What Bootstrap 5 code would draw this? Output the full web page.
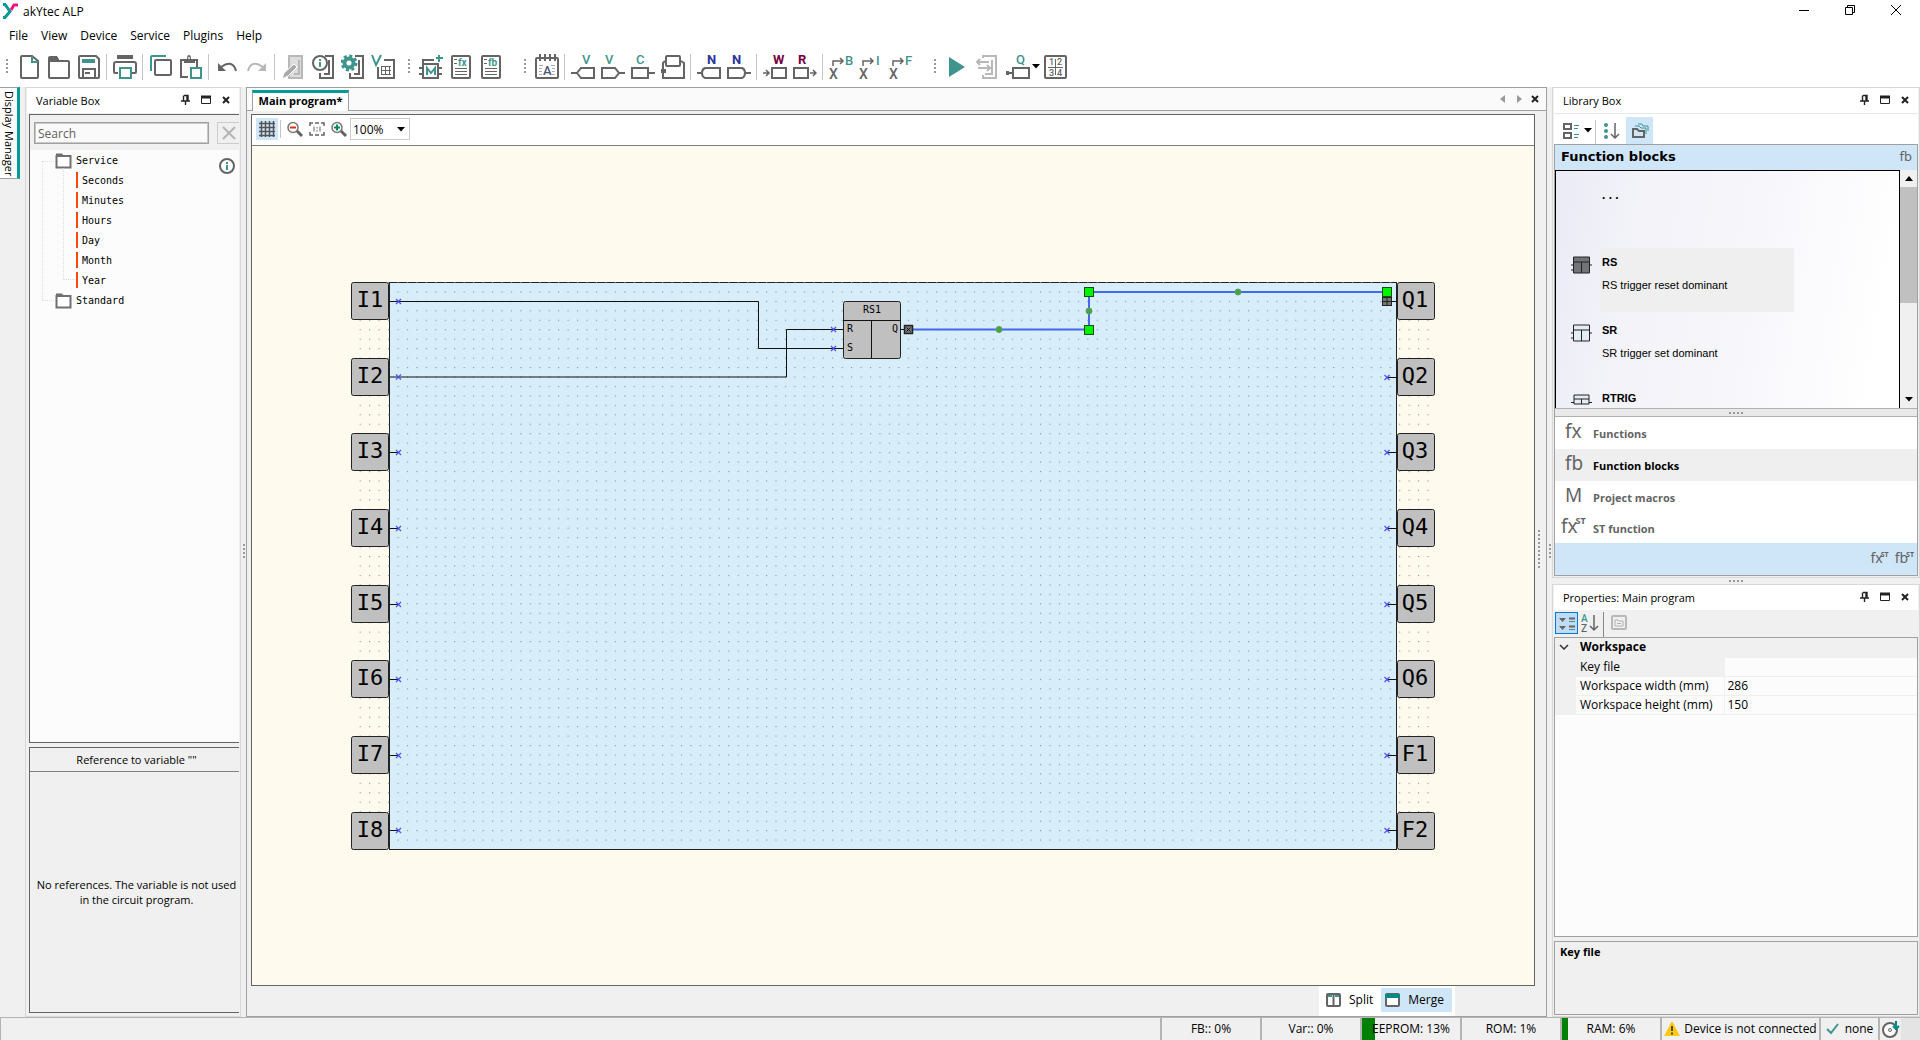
<!DOCTYPE html>
<html lang="en">
<head>
<meta charset="utf-8">
<meta name="viewport" content="width=device-width, initial-scale=1">
<title>akYtec ALP</title>
<link href="https://cdn.jsdelivr.net/npm/bootstrap@5.3.0/dist/css/bootstrap.min.css" rel="stylesheet">
<style>
:root{--ink:#646464;--teal:#3f958e;--brand:#009b96;--face:#f0f0f0;--sel:#cfe6f9;--edge:#a0a0a0;--soft:#d8d8d8;--dark:#646464}
body{font-family:"Open Sans","Noto Sans",sans-serif;font-size:11px;line-height:15px;color:#000;background:#fff;overflow:hidden}
svg{display:block;fill:none;flex:none}
button{border:0;background:none;padding:0;color:inherit;display:flex;align-items:center;justify-content:center}
.s{stroke:var(--ink);stroke-width:2}.s1{stroke:var(--ink);stroke-width:1}
.t{stroke:var(--teal);stroke-width:2}.t1{stroke:var(--teal);stroke-width:1}
.g{stroke:#b8b8b8;stroke-width:2}
.ft{fill:var(--teal)}.fi{fill:var(--ink)}.fw{fill:#fff}.fk{fill:#222}
.ic text{font-family:Roboto,"Liberation Sans",sans-serif;font-weight:500;font-size:13px}
.titlebar{height:24px;padding-left:2px;gap:4px}
.titlebar,.menubar{font-size:12px}
.caption-btn{width:46px;height:20px}
.titlebar .caption-btn:last-child{width:45px;margin-right:2px}
.menubar{height:24px;padding:0 0 2px 9px;gap:13px}
.menubar a{color:#000;text-decoration:none}
.toolbars{height:39px;padding-bottom:2px}
.bar-b{margin-left:4px}.bar-c,.bar-d{margin-left:12px}
.tool{width:30px;height:30px}
.grip{width:14px;height:30px;display:flex;justify-content:center;align-items:center}
.grip i,.vgrip{width:2px;height:16px;background:repeating-linear-gradient(#999 0 2px,transparent 2px 4px)}
.rule{width:2px;height:26px;margin:0 2px;border-left:1px solid #c4c4c4}
.work{background:var(--face);min-height:0}
.rail{width:25px}
.dm-tab{writing-mode:vertical-rl;white-space:nowrap;width:20px;height:92px;background:#fff;border-right:3px solid var(--brand);border-top:1px solid var(--edge);border-bottom:1px solid var(--edge);justify-content:flex-start;padding-top:3px;font-size:11px;line-height:16px}
.pane{border:1px solid var(--soft)}
.pane-head{height:25px;background:#fff;padding:0 3px 1px 9px;margin:0 1px}
.pane-head button{width:20px;height:20px}
.left{width:216px}
.box{border:1px solid var(--dark)}
.var-box{margin:1px 1px 0 3px}
.ref-box{margin:4px 1px 3px 3px;height:266px}
.search-row{height:35px;padding:7px 0 0 4px;gap:8px}
.search-row input{width:178px;height:22px;border:1px solid var(--edge);outline:1px solid #c8c8c8;outline-offset:-2px;background:#fafafa;padding:0 3px;font-size:12px}
.search-row input::placeholder{color:#606060}
.clear-btn{width:22px;height:22px;border:1px solid #ccc;border-right:0}
.tree{background:#fcfcfc;font-family:"DejaVu Sans Mono",monospace;font-size:10px}
.tree ul{list-style:none;margin:0;padding:0;position:relative}
.tree li>span{height:20px;display:flex;align-items:center}
.tree>ul::before{content:"";position:absolute;left:12px;top:11px;width:12px;height:140px;border:1px dotted #ddd;border-right:0}
.tree li>ul::before{content:"";position:absolute;left:33px;top:-2px;width:12px;height:112px;border:1px dotted #ddd;border-width:0 0 1px 1px}
.tree .folder{padding-left:25px;gap:4px}
.tree .leaf{padding-left:46px;gap:4px}
.tree .leaf::before{content:"";width:2px;height:16px;background:#f84a0a}
.ref-head{height:24px;border-bottom:1px solid #808080}
.splitter{width:5px}
.center{border:1px solid var(--edge);min-width:0}
.strip{height:23px;background:#fafafa;border-bottom:1px solid var(--edge);padding-left:5px}
.doc-tab{height:21px;margin-bottom:-1px;background:#fff;border:1px solid var(--edge);border-bottom:0;border-top:3px solid var(--brand);padding:0 4px 3px;width:97px;font-weight:700;white-space:nowrap}
.strip-nav{padding:0 3px 2px 0}
.strip-nav button{width:16px;height:18px}
.editor{margin:3px 0 0 4px}
.zoombar{height:31px;background:#fff;border-bottom:1px solid #808080;padding:0 0 2px 4px}
.grid-btn{width:22px;height:22px;background:var(--sel)}
.zoombar .rule{height:18px;margin:0 2px}
.zoom-btn{width:22px;height:22px}
.zoom-pick{position:relative;width:60px;height:22px}
.zoom-pick select{appearance:none;width:100%;height:100%;border:1px solid #ccc;background:#fff;font-size:12px;padding:0 2px;border-radius:0;color:#000}
.zoom-pick svg{position:absolute;right:5px;top:9px;pointer-events:none}
.canvas{background:#fffaee;min-height:0;overflow:hidden}
.canvas text{font-family:"DejaVu Sans Mono",monospace;fill:#000;text-anchor:middle}
.pin{font-size:22px}.tiny{font-size:10px}
.right-grip{width:11px;display:flex;align-items:center;justify-content:flex-start;padding-left:3px}
.right-grip .vgrip{height:38px}
.view-row{height:30px;padding-right:91px}
.view-tabs{background:#fff;padding:0 4px 3px 3px;width:136px;height:30px}
.view-tabs button{height:24px;gap:7px;padding:0 8px 0 3px;font-size:12px}
.view-tabs .active{background:var(--sel)}
.right{width:368px}
.lib-tools{height:31px;background:#fff;border-top:1px solid #e6e6e6;padding-left:9px;margin:0 1px}
.lib-tools button{height:27px}
.lib-tools .rule{height:24px;margin:0 6px 0 3px}
.sort-btn{margin-right:5px}
.cat-btn{width:27px;background:var(--sel)}
.lib{border:1px solid var(--edge);margin:0 1px 1px}
.lib-head{height:25px;background:var(--sel);padding:0 5px 2px 6px;font-family:"DejaVu Sans",sans-serif;font-weight:700;font-size:13px}
.fx-l{font-family:"Noto Sans",sans-serif;color:var(--ink);font-weight:400}
.lib-head .fx-l{font-size:13px}
.blocks{height:238px;border:1px solid #000;border-bottom:0;overflow:hidden;background:linear-gradient(100deg,#ebebf6,#f3f3f9 25%,#f7f6fb 55%,#fff 92%);font-family:"Liberation Sans",sans-serif}
.block-row{height:68px;padding:9px 0 0 14px}
.block-row .hit{width:194px;height:64px;padding:0 2px;text-align:left;display:flex;flex-direction:column;justify-content:flex-start;align-items:flex-start}
.block-row .hit.on{background:#efefef}
.block-row b,.block-row small{display:block;font-size:11px;line-height:15px}
.block-row b{margin-top:7px}
.block-row small{margin-top:8px}
.up-row{height:68px;padding:17px 0 0 46px;font-size:12px;font-weight:700}
.sbar{width:17px;background:var(--face)}
.sbar i{height:116px;background:#c0c0c0}
.sbar span{height:17px;display:flex;align-items:center;justify-content:center}
.hsplit{height:9px;background:#e9e9e9;border-top:1px solid #b0b0b0;border-bottom:1px solid #b0b0b0}
.dots{width:14px;height:2px;background:repeating-linear-gradient(90deg,#999 0 2px,transparent 2px 4px)}
.cat{height:32px;width:100%;background:#fff;color:var(--ink);font-weight:700;font-size:11px;justify-content:flex-start;padding-left:6px}
.cat .fx-l{width:32px;font-size:19px;padding:0 0 4px 4px;text-align:left;white-space:nowrap}
.cat .fx-l.wide-l{padding-left:0}
.cat.active{background:#efefef;color:#000}
.cat:last-of-type{height:30px}
.fx-l sup{font-size:9px;font-weight:700;top:-9px;left:-2px}
.more{height:32px;background:var(--sel);padding:0 1px 4px 0;gap:4px}
.more .fx-l{font-size:14px}.more .fx-l sup{font-size:7px;top:-6px}
.pane-gap{height:6px}
.prop-tools{height:27px;padding:2px 0 0 2px}
.prop-tools .on{background:#bfdcf3;border:1px solid #0078d7}
.prop-tools button{width:23px;height:22px}
.prop-tools .rule{border-color:#888}
.props{border:1px solid var(--edge);background:#fcfcfc;margin:0 1px}
.props table{width:100%;table-layout:fixed;font-size:12px}
.props td,.props th{height:19px;line-height:18px;padding:0 3px;border-bottom:1px solid #f0f0f0;font-weight:400}
.props .gut{width:21px;background:var(--face);padding:0}
.props .nm{width:148px;border-right:1px solid #f0f0f0;padding-left:4px}
.props .hd{background:var(--face);font-weight:700}
.props .cur{background:var(--face)}
.desc{height:74px;border:1px solid var(--edge);margin:4px 1px 1px;padding:2px 5px;font-weight:700}
.status{height:23px;background:var(--face);border-top:1px solid #b4b4b4;font-size:12px}
.cell{border-left:2px solid #b4b4b4;width:100px;height:22px;padding-bottom:1px;display:flex;align-items:center;justify-content:center;position:relative}
.cell i{position:absolute;left:0;top:0;bottom:0;background:#008000}
.cell span{position:relative;white-space:nowrap}
.cell-dev{width:159px;gap:4px}.cell-ok{width:59px;gap:6px}.cell-disk{width:23px}.cell-end{width:19px;background:#e4e4e4}
.lone{border-left:1px solid #b4b4b4}
</style>
<script src="https://cdn.jsdelivr.net/npm/bootstrap@5.3.0/dist/js/bootstrap.bundle.min.js"></script>
</head>
<body class="d-flex flex-column vh-100">
<svg width="0" height="0" class="position-absolute" aria-hidden="true">
<defs>
<symbol id="pinup" viewBox="0 0 12 12"><path d="M4 1.500h4v5M3.500 1.500v5M7 2v5M1 7h9M5.500 7v4" stroke="#222" stroke-width="1.400"/></symbol>
<symbol id="maxi" viewBox="0 0 12 12"><path d="M1.500 3v6.500h9V3" stroke="#222"/><path d="M1 1.500h10v3H1z" class="fk"/></symbol>
<symbol id="shut" viewBox="0 0 12 12"><path d="M3 3l6 6M9 3l-6 6" stroke="#222" stroke-width="2"/></symbol>
<symbol id="caret" viewBox="0 0 8 5"><path d="M0 0h8L4 4.500z" fill="#000"/></symbol>
<symbol id="folder" viewBox="0 0 17 17"><path d="M1.500 4v11.500h14V4z" stroke="#707074" stroke-width="2" fill="#fff"/><path d="M1 1.500h6l1.500 2H1z" fill="#707074"/></symbol>
<symbol id="bx" viewBox="0 0 38 38"><rect x=".5" y=".5" width="37" height="37" rx="2" fill="#c0c0c0" stroke="#222"/></symbol>
<symbol id="trig" viewBox="0 0 22 18"><path d="M3.500 1h16v16h-16zM3.500 6h16M11.500 6v11M1 9h2M1 14h2M20 9h2" stroke="#222"/></symbol>
</defs>
</svg>

<header>
<div class="titlebar d-flex align-items-start">
<svg width="17" height="20" viewBox="0 0 17 20"><path d="M1 4.500h2l5 7-5 6H1" stroke="#009b96" stroke-width="3"/><path d="M9 10l3-5h4" stroke="#f0147c" stroke-width="3"/></svg>
<span class="pt-1">akYtec ALP</span>
<div class="ms-auto d-flex">
<button class="caption-btn" aria-label="Minimize"><svg width="12" height="12"><path d="M1 6.500h10" stroke="#000"/></svg></button>
<button class="caption-btn" aria-label="Restore"><svg width="12" height="12"><path d="M1.500 3.500h7v7h-7zM3.500 3V1.500h7v7H9" stroke="#000"/></svg></button>
<button class="caption-btn" aria-label="Close"><svg width="12" height="12"><path d="M1 1l10 10M11 1L1 11" stroke="#000"/></svg></button>
</div>
</div>
<nav class="menubar d-flex align-items-center" aria-label="Main menu"><a href="#">File</a><a href="#">View</a><a href="#">Device</a><a href="#">Service</a><a href="#">Plugins</a><a href="#">Help</a></nav>
<div class="toolbars d-flex align-items-center ic">
<div class="d-flex align-items-center">
<div class="grip"><i></i></div>
<button class="tool" aria-label="New"><svg width="24" height="26"><path d="M15 2H5q-1 0-1 1v20q0 1 1 1h15q1 0 1-1V7z" class="s"/><path d="M15 2v6h6" class="t"/></svg></button>
<button class="tool" aria-label="Open"><svg width="24" height="26"><path d="M2 7v16q0 1 1 1h18q1 0 1-1V8q0-1-1-1z" class="s"/><path d="M1 8V4q0-2 2-2h7l3 5z" class="fi"/></svg></button>
<button class="tool" aria-label="Save"><svg width="24" height="26"><path d="M3 2h16l3 3v18q0 1-1 1H3q-1 0-1-1V3q0-1 1-1zM6 24v-9h12v9" class="s"/><path d="M5 5h13v4H5z" class="ft"/><path d="M8 19h5" class="s"/></svg></button>
<div class="rule"></div>
<button class="tool" aria-label="Print"><svg width="24" height="26"><path d="M5 19H2q-1 0-1-1v-8q0-2 2-2h18q2 0 2 2v8q0 1-1 1h-3" class="s"/><path d="M4 1h16v4H4z" class="fi"/><path d="M7 14h11v10H7z" class="t fw"/></svg></button>
<div class="rule"></div>
<button class="tool" aria-label="Copy"><svg width="24" height="26"><rect x="6" y="6" width="16" height="15" rx="1" class="s"/><path d="M2 17V3q0-1 1-1h14" class="t"/></svg></button>
<button class="tool" aria-label="Paste"><svg width="24" height="26"><path d="M9 23H2V6h16v7M6 8h9" class="s"/><path d="M5 9V6l3-1q0-4 2-4t2 4l4 1v3z" class="fi"/><circle cx="10" cy="4" r="1" class="fw"/><path d="M12 14h10v10H12z" class="t fw"/></svg></button>
<div class="rule"></div>
<button class="tool" aria-label="Undo"><svg width="24" height="26"><path d="M6 13Q18 5 21 17" class="s"/><path d="M3 9v8h8z" class="fi"/></svg></button>
<button class="tool" aria-label="Redo"><svg width="24" height="26"><path d="M18 13Q6 5 3 17" class="g"/><path d="M21 9v8h-8z" fill="#b8b8b8"/></svg></button>
<div class="rule"></div>
<button class="tool" aria-label="Edit device"><svg width="24" height="26"><path d="M8 2h13v22H8z" class="g" fill="#ddd"/><path d="M18 6v14h-5" class="g"/><path d="M1 25l2-6 10-9 3 3-9 9z" fill="#aaa" stroke="#fff"/></svg></button>
<button class="tool" aria-label="Device information"><svg width="24" height="26"><path d="M14 2h8v22H9v-5M18 6v14h-5" class="s"/><circle cx="9" cy="9" r="7" class="s fw"/><path d="M9 8v5M9 5v2" class="t"/></svg></button>
<button class="tool" aria-label="Device settings"><svg width="24" height="26"><path d="M14 2h8v22H9v-5M18 6v14h-5" class="s"/><circle cx="8" cy="9" r="4.500" stroke="#3f958e" stroke-width="4"/><circle cx="8" cy="9" r="7" stroke="#3f958e" stroke-width="3" stroke-dasharray="3 2.500"/></svg></button>
<button class="tool" aria-label="Variable table"><svg width="24" height="26"><path d="M13 6h10v18H7V13" class="s"/><path d="M10.500 12v8M14.500 12v8M18.500 12v8M10 12.500h10M10 16.500h10M10 20.500h10" class="s1"/><path d="M1 1l4 10 5-10" class="t"/></svg></button>
</div>
<div class="bar-b d-flex align-items-center">
<div class="grip"><i></i></div>
<button class="tool" aria-label="New macro"><svg width="24" height="26"><path d="M4 10V6h11M4 10h15v14H4zM0 14h4M0 20h4M19 20h4M19 14h4" class="s"/><path d="M8 21v-7l4 5 4-5v7M20 1v7M17 4h7" class="t"/></svg></button>
<button class="tool" aria-label="New function"><svg width="24" height="26"><rect x="3" y="2" width="18" height="22" rx="1" class="s"/><path d="M6 14.500h12M6 17.500h12M6 20.500h12M5 5.500h3M5 9.500h3" class="s1"/><text x="9" y="12" class="ft" style="font-size:10px;font-weight:700">fx</text></svg></button>
<button class="tool" aria-label="New function block"><svg width="24" height="26"><rect x="3" y="2" width="18" height="22" rx="1" class="s"/><path d="M6 14.500h12M6 17.500h12M6 20.500h12M5 5.500h3M5 9.500h3" class="s1"/><text x="9" y="12" class="ft" style="font-size:10px;font-weight:700">fb</text></svg></button>
</div>
<div class="bar-c d-flex align-items-center">
<div class="grip"><i></i></div>
<button class="tool" aria-label="Comment"><svg width="24" height="26"><rect x="1" y="4" width="22" height="20" rx="1" class="s"/><path d="M5 0v7M10 0v7M15 0v7M20 0v7" class="s"/><path d="M4 11.500h4M16 11.500h4M4 14.500h3M17 14.500h3M4 17.500h3M17 17.500h3M4 20.500h3M17 20.500h3" stroke="#aab"/><text x="8" y="21" fill="#4a5a70">A</text></svg></button>
<div class="rule"></div>
<button class="tool" aria-label="Variable input"><svg width="24" height="26"><path d="M23 14H10l-4 5 4 5h13zM0 19h6" class="s"/><text x="11" y="10" class="ft">V</text></svg></button>
<button class="tool" aria-label="Variable output"><svg width="24" height="26"><path d="M1 14h13l4 5-4 5H1zM18 19h6" class="s"/><text x="4" y="10" class="ft">V</text></svg></button>
<button class="tool" aria-label="Constant"><svg width="24" height="26"><path d="M1 14h16v10H1zM17 19h7" class="s"/><text x="5" y="10" class="ft">C</text></svg></button>
<button class="tool" aria-label="Delay line"><svg width="24" height="26"><rect x="5" y="2" width="14" height="10" rx="1" class="s"/><path d="M4 7L2 9v15h21V9l-3-2" class="s"/><path d="M0 15h5v4H0z" class="fi"/></svg></button>
<div class="rule"></div>
<button class="tool" aria-label="Network input"><svg width="24" height="26"><path d="M23 14H8q-3 1-3 5t3 5h15zM0 19h5" class="s"/><text x="10" y="10" fill="#26349c" style="font-weight:700">N</text></svg></button>
<button class="tool" aria-label="Network output"><svg width="24" height="26"><path d="M1 14h14q3 1 3 5t-3 5H1zM18 19h6" class="s"/><text x="5" y="10" fill="#26349c" style="font-weight:700">N</text></svg></button>
<div class="rule"></div>
<button class="tool" aria-label="Write"><svg width="24" height="26"><path d="M9 14h14v10H9z" class="s"/><path d="M0 19h6M3 16l3 3-3 3" class="s" style="stroke-width:1.500"/><text x="10" y="10" fill="#780040" style="font-weight:700">W</text></svg></button>
<button class="tool" aria-label="Read"><svg width="24" height="26"><path d="M1 14h14v10H1z" class="s"/><path d="M17 19h6M20 16l3 3-3 3" class="s" style="stroke-width:1.500"/><text x="5" y="10" fill="#780040" style="font-weight:700">R</text></svg></button>
<div class="rule"></div>
<button class="tool" aria-label="Convert to Boolean"><svg width="24" height="26"><path d="M4 12V7h10M11 4l3 3-3 3" class="s" style="stroke-width:1.500"/><text x="0" y="25" class="fi" style="font-size:14px">X</text><text x="16" y="11" class="ft">B</text></svg></button>
<button class="tool" aria-label="Convert to integer"><svg width="24" height="26"><path d="M4 12V7h10M11 4l3 3-3 3" class="s" style="stroke-width:1.500"/><text x="0" y="25" class="fi" style="font-size:14px">X</text><text x="17" y="11" class="ft">I</text></svg></button>
<button class="tool" aria-label="Convert to float"><svg width="24" height="26"><path d="M4 12V7h10M11 4l3 3-3 3" class="s" style="stroke-width:1.500"/><text x="0" y="25" class="fi" style="font-size:14px">X</text><text x="16" y="11" class="ft">F</text></svg></button>
</div>
<div class="bar-d d-flex align-items-center">
<div class="grip"><i></i></div>
<button class="tool" aria-label="Run simulation"><svg width="24" height="26"><path d="M4 3l16 10L4 23z" class="ft"/></svg></button>
<button class="tool" aria-label="Transfer to device"><svg width="24" height="26"><path d="M8 4V2h13v22H8v-3" class="g"/><path d="M17 6v14h-7" class="g"/><path d="M2 8h12M5 5L2 8l3 3M16 14H3M12 11l3 3-3 3" class="g"/></svg></button>
<button class="tool w-auto ps-1" aria-label="Outputs"><svg width="26" height="26"><path d="M7 14h16v10H7zM0 19h7" class="s"/><path d="M0 17h3v4H0z" class="fi"/><text x="10" y="10" class="ft">Q</text></svg><svg width="8" height="5"><use href="#caret"/></svg></button>
<button class="tool" aria-label="Order"><svg width="24" height="26"><rect x="2" y="2" width="21" height="22" rx="1" class="s"/><path d="M5 13.500h15M12.500 5v16" class="s1"/><text x="6" y="11" class="fi" style="font-size:9px">1</text><text x="14" y="11" class="fi" style="font-size:9px">2</text><text x="6" y="22" class="fi" style="font-size:9px">3</text><text x="14" y="22" class="fi" style="font-size:9px">4</text></svg></button>
</div>
</div>
</header>

<main class="work d-flex flex-fill overflow-hidden">
<div class="rail"><button class="dm-tab">Display Manager</button></div>

<aside class="left pane d-flex flex-column">
<div class="pane-head d-flex align-items-center"><span class="me-auto">Variable Box</span>
<button aria-label="Pin"><svg width="12" height="12"><use href="#pinup"/></svg></button><button aria-label="Maximize"><svg width="12" height="12"><use href="#maxi"/></svg></button><button aria-label="Close"><svg width="12" height="12"><use href="#shut"/></svg></button></div>
<div class="box var-box border-end-0 d-flex flex-column flex-fill">
<div class="search-row d-flex"><label class="visually-hidden" for="q">Search variables</label><input id="q" type="text" placeholder="Search"><button class="clear-btn" aria-label="Clear search"><svg width="14" height="14"><path d="M1 1l12 12M13 1L1 13" stroke="#b4b4b4" stroke-width="2"/></svg></button></div>
<div class="tree d-flex flex-fill justify-content-between">
<ul>
<li><span class="folder"><svg width="17" height="17"><use href="#folder"/></svg>Service</span>
<ul><li><span class="leaf">Seconds</span></li><li><span class="leaf">Minutes</span></li><li><span class="leaf">Hours</span></li><li><span class="leaf">Day</span></li><li><span class="leaf">Month</span></li><li><span class="leaf">Year</span></li></ul></li>
<li><span class="folder"><svg width="17" height="17"><use href="#folder"/></svg>Standard</span></li>
</ul>
<svg width="18" height="18" class="mt-2 me-1"><circle cx="10" cy="8" r="7" class="s fw"/><path d="M10 7v5M10 4v2" class="t"/></svg>
</div>
</div>
<div class="box ref-box border-end-0 d-flex flex-column">
<div class="ref-head d-flex align-items-center justify-content-center ps-1">Reference to variable ""</div>
<div class="flex-fill d-flex align-items-center justify-content-center text-center ps-1">No references. The variable is not used<br>in the circuit program.</div>
</div>
</aside>

<div class="splitter d-flex align-items-center justify-content-center"><div class="vgrip"></div></div>

<section class="center d-flex flex-column flex-fill">
<div class="strip d-flex align-items-end">
<button class="doc-tab">Main program*</button>
<div class="strip-nav d-flex ms-auto"><button aria-label="Previous"><svg width="6" height="8"><path d="M5 0v8L0 4z" fill="#999"/></svg></button><button aria-label="Next"><svg width="6" height="8"><path d="M1 0v8l5-4z" fill="#999"/></svg></button><button aria-label="Close document"><svg width="12" height="12"><use href="#shut"/></svg></button></div>
</div>
<div class="d-flex flex-fill" style="min-height:0">
<div class="box editor d-flex flex-column flex-fill">
<div class="zoombar d-flex align-items-center">
<button class="grid-btn" aria-label="Show grid"><svg width="16" height="16"><path d="M2.500 0v16M6.500 0v16M10.500 0v16M14.500 0v16M0 2.500h16M0 6.500h16M0 10.500h16M0 14.500h16" stroke="#555" stroke-width="1.500"/></svg></button>
<div class="rule"></div>
<button class="zoom-btn" aria-label="Zoom out"><svg width="17" height="17"><circle cx="6" cy="6.500" r="5" stroke="#777" stroke-width="1.500"/><path d="M10 10l5 5" class="s" style="stroke-width:3"/><path d="M3 6.500h6" stroke="#e03010" stroke-width="2"/></svg></button>
<button class="zoom-btn" aria-label="Actual size"><svg width="17" height="17"><path d="M1 5V2h3M12 2h3v3M15 11v3h-3M4 14H1v-3M6 2h4M6 14h4" class="s" style="stroke-width:1.500"/><path d="M5 5.500v5M11 5.500v5M8 6v1.500M8 9v1.500" class="s1"/></svg></button>
<button class="zoom-btn" aria-label="Zoom in"><svg width="17" height="17"><circle cx="6" cy="6.500" r="5" stroke="#777" stroke-width="1.500"/><path d="M10 10l5 5" class="s" style="stroke-width:3"/><path d="M3 6.500h6M6 3.500v6" stroke="#008a60" stroke-width="2"/></svg></button>
<div class="zoom-pick"><select aria-label="Zoom"><option>100%</option><option>150%</option><option>200%</option></select><svg width="8" height="5"><use href="#caret"/></svg></div>
</div>
<div class="canvas flex-fill d-flex align-items-center justify-content-center">
<svg width="1086" height="569" viewBox="0 0 1086 569" role="img" aria-label="Circuit program">
<defs>
<pattern id="grid" width="10" height="10" patternUnits="userSpaceOnUse" patternTransform="translate(38 0) scale(.945)"><rect x="0" y="1" width="1.200" height="1.200" fill="#8a9298"/></pattern>
<path id="xm" d="M-2.500-2.500l5 5M2.500-2.500l-5 5" stroke="#5050f0" stroke-width="1.200"/>
</defs>
<rect x="39.500" y="1.500" width="1007" height="567" fill="#d8edfa" stroke="#222"/>
<path d="M9 1h1075v567H9z" fill="url(#grid)"/>
<g id="pins">
<use href="#bx" x="1" y="1" width="38" height="38"/><text class="pin" x="20" y="26">I1</text>
<use href="#bx" x="1" y="77" width="38" height="38"/><text class="pin" x="20" y="102">I2</text>
<use href="#bx" x="1" y="152" width="38" height="38"/><text class="pin" x="20" y="177">I3</text>
<use href="#bx" x="1" y="228" width="38" height="38"/><text class="pin" x="20" y="253">I4</text>
<use href="#bx" x="1" y="304" width="38" height="38"/><text class="pin" x="20" y="329">I5</text>
<use href="#bx" x="1" y="379" width="38" height="38"/><text class="pin" x="20" y="404">I6</text>
<use href="#bx" x="1" y="455" width="38" height="38"/><text class="pin" x="20" y="480">I7</text>
<use href="#bx" x="1" y="531" width="38" height="38"/><text class="pin" x="20" y="556">I8</text>
<use href="#bx" x="1047" y="1" width="38" height="38"/><text class="pin" x="1065" y="26">Q1</text>
<use href="#bx" x="1047" y="77" width="38" height="38"/><text class="pin" x="1065" y="102">Q2</text>
<use href="#bx" x="1047" y="152" width="38" height="38"/><text class="pin" x="1065" y="177">Q3</text>
<use href="#bx" x="1047" y="228" width="38" height="38"/><text class="pin" x="1065" y="253">Q4</text>
<use href="#bx" x="1047" y="304" width="38" height="38"/><text class="pin" x="1065" y="329">Q5</text>
<use href="#bx" x="1047" y="379" width="38" height="38"/><text class="pin" x="1065" y="404">Q6</text>
<use href="#bx" x="1047" y="455" width="38" height="38"/><text class="pin" x="1065" y="480">F1</text>
<use href="#bx" x="1047" y="531" width="38" height="38"/><text class="pin" x="1065" y="556">F2</text>
</g>
<path d="M39 20.500h369.500v47H493M39 96h397.500V48.500H493M39 171.500h9M39 247.500h9M39 323.500h9M39 398.500h9M39 474.500h9M39 549.500h9M1047 20.500h-9M1047 96.500h-9M1047 171.500h-9M1047 247.500h-9M1047 323.500h-9M1047 398.500h-9M1047 474.500h-9M1047 549.500h-9M550 48.500h8" stroke="#111"/>
<use href="#xm" x="48.500" y="20.500"/><use href="#xm" x="48.500" y="96"/><use href="#xm" x="48.500" y="171.500"/><use href="#xm" x="48.500" y="247.500"/><use href="#xm" x="48.500" y="323.500"/><use href="#xm" x="48.500" y="398.500"/><use href="#xm" x="48.500" y="474.500"/><use href="#xm" x="48.500" y="549.500"/>
<use href="#xm" x="1037" y="96.500"/><use href="#xm" x="1037" y="171.500"/><use href="#xm" x="1037" y="247.500"/><use href="#xm" x="1037" y="323.500"/><use href="#xm" x="1037" y="398.500"/><use href="#xm" x="1037" y="474.500"/><use href="#xm" x="1037" y="549.500"/>
<use href="#xm" x="483.500" y="48.500"/><use href="#xm" x="483.500" y="67.500"/>
<rect x="493.500" y="20.500" width="57" height="57" rx="2" fill="#c0c0c0" stroke="#222"/>
<path d="M493 39.500h57M521.500 39v38" stroke="#111"/>
<text class="tiny" x="522" y="32">RS1</text><text class="tiny" x="500" y="51">R</text><text class="tiny" x="500" y="70">S</text><text class="tiny" x="545" y="51">Q</text>
<path d="M563 48.500h176V11h298" stroke="#4468f0" stroke-width="2"/>
<g fill="#40a840" stroke="#689868"><circle cx="649" cy="48.500" r="3"/><circle cx="739" cy="30" r="3"/><circle cx="888" cy="11" r="3"/></g>
<g fill="#00f400" stroke="#145014"><rect x="734.500" y="6.500" width="9" height="9"/><rect x="734.500" y="44.500" width="9" height="9"/><rect x="1032.500" y="6.500" width="9" height="9"/></g>
<rect x="554.500" y="44.500" width="8" height="8" fill="#777" stroke="#222" stroke-width="1.500"/><path d="M556.500 46.500l4 4M560.500 46.500l-4 4" stroke="#111"/>
<rect x="1032.500" y="16.500" width="9" height="8" fill="#777" stroke="#222"/><path d="M1037 16v9M1032 20.500h9" stroke="#222"/>
</svg>
</div>
</div>
<div class="right-grip"><div class="vgrip"></div></div>
</div>
<div class="view-row d-flex justify-content-end">
<div class="view-tabs d-flex align-items-center justify-content-between">
<button><svg width="17" height="16"><rect x="2" y="2" width="13" height="12" rx="1" class="s"/><path d="M8.500 2v12" class="s"/><path d="M3 3h4v2H3zM10 3h4v2h-4z" class="ft"/></svg>Split</button>
<button class="active"><svg width="17" height="16"><rect x="2" y="2" width="13" height="12" rx="1" class="s fw"/><path d="M1 2h15v4H1z" fill="#008a84"/></svg>Merge</button>
</div>
</div>
</section>

<div class="splitter d-flex align-items-center justify-content-center"><div class="vgrip"></div></div>

<aside class="right d-flex flex-column">
<section class="pane">
<div class="pane-head d-flex align-items-center"><span class="me-auto">Library Box</span>
<button aria-label="Pin"><svg width="12" height="12"><use href="#pinup"/></svg></button><button aria-label="Maximize"><svg width="12" height="12"><use href="#maxi"/></svg></button><button aria-label="Close"><svg width="12" height="12"><use href="#shut"/></svg></button></div>
<div class="lib-tools d-flex align-items-end">
<button aria-label="View" class="gap-1"><svg width="17" height="18"><path d="M1 2h7v5H1zM1 11h7v5H1z" class="s"/><path d="M11 3.500h5M11 6.500h4M11 12.500h5M11 15.500h4" class="t1"/></svg><svg width="8" height="5"><use href="#caret"/></svg></button>
<div class="rule"></div>
<button aria-label="Sort" class="sort-btn"><svg width="18" height="18"><circle cx="3" cy="3" r="2" class="ft"/><circle cx="3" cy="9" r="2" class="ft"/><circle cx="3" cy="15" r="2" class="ft"/><path d="M12 1v15M8 12l4 4 4-4" class="s" style="stroke-width:1.500"/></svg></button>
<button class="cat-btn" aria-label="Categories"><svg width="18" height="18"><path d="M2 15V7h4l2 2h5v6z" class="s"/><path d="M4 4h4l2 2h5v6M7 2h4l1 2h5v5" class="t1"/></svg></button>
</div>
<div class="lib">
<div class="lib-head d-flex justify-content-between align-items-center"><span>Function blocks</span><span class="fx-l">fb</span></div>
<div class="d-flex">
<div class="blocks flex-fill">
<div class="up-row">. . .</div>
<div class="block-row d-flex"><svg width="22" height="18" class="mt-2 me-2"><path d="M3 1h16v16H3z" fill="#707478"/><use href="#trig"/></svg><button class="hit on"><b>RS</b><small>RS trigger reset dominant</small></button></div>
<div class="block-row d-flex"><svg width="22" height="18" class="mt-2 me-2"><path d="M3 1h16v16H3z" fill="#e4ecf4"/><use href="#trig"/></svg><button class="hit"><b>SR</b><small>SR trigger set dominant</small></button></div>
<div class="block-row d-flex"><svg width="22" height="18" class="mt-2 me-2"><path d="M4 3h15v9H4zM4 7h15M11.500 7v5M1 10.500h3M19 10.500h3" fill="#e4ecf4" stroke="#222"/></svg><button class="hit"><b>RTRIG</b></button></div>
</div>
<div class="sbar d-flex flex-column"><span><svg width="8" height="5"><path d="M0 5h8L4 0z" fill="#000"/></svg></span><i></i><span class="mt-auto"><svg width="8" height="5"><use href="#caret"/></svg></span></div>
</div>
<div class="hsplit d-flex align-items-center justify-content-center"><div class="dots"></div></div>
<button class="cat"><span class="fx-l">fx</span>Functions</button>
<button class="cat active"><span class="fx-l">fb</span>Function blocks</button>
<button class="cat"><span class="fx-l">M</span>Project macros</button>
<button class="cat"><span class="fx-l wide-l">fx<sup>ST</sup></span>ST function</button>
<div class="more d-flex align-items-center justify-content-end"><span class="fx-l">fx<sup>ST</sup></span><span class="fx-l">fb<sup>ST</sup></span></div>
</div>
</section>
<div class="pane-gap d-flex align-items-center justify-content-center"><div class="dots"></div></div>
<section class="pane d-flex flex-column flex-fill">
<div class="pane-head d-flex align-items-center"><span class="me-auto">Properties: Main program</span>
<button aria-label="Pin"><svg width="12" height="12"><use href="#pinup"/></svg></button><button aria-label="Maximize"><svg width="12" height="12"><use href="#maxi"/></svg></button><button aria-label="Close"><svg width="12" height="12"><use href="#shut"/></svg></button></div>
<div class="prop-tools d-flex">
<button class="on" aria-label="Categorized"><svg width="18" height="18"><path d="M1 4h7L4.500 8zM1 12h7L4.500 16z" class="fi"/><path d="M11 4.500h6M11 12.500h6" class="s"/><path d="M11 7.500h6M11 15.500h6" class="t1"/></svg></button>
<button aria-label="Alphabetical" class="ic"><svg width="18" height="20"><text x="0" y="9" class="ft" style="font-size:10px">A</text><text x="0" y="19" class="fi" style="font-size:10px">Z</text><path d="M13 2v15M9 13l4 4 4-4" class="s" style="stroke-width:1.500"/></svg></button>
<div class="rule"></div>
<button aria-label="Property pages"><svg width="18" height="18"><rect x="2" y="2" width="14" height="13" rx="1" class="g"/><path d="M5 12V6h3l1 1h4v5z" stroke="#b0b0b0"/><path d="M7 9.500h4" stroke="#b0b0b0"/></svg></button>
</div>
<div class="props flex-fill">
<table>
<tr><td class="gut"><svg width="10" height="6" class="ms-1"><path d="M1 1l4 4 4-4" stroke="#333" stroke-width="1.500"/></svg></td><th class="nm hd">Workspace</th><td class="hd"></td></tr>
<tr><td class="gut"></td><td class="nm cur">Key file</td><td></td></tr>
<tr><td class="gut"></td><td class="nm">Workspace width (mm)</td><td>286</td></tr>
<tr><td class="gut"></td><td class="nm">Workspace height (mm)</td><td>150</td></tr>
</table>
</div>
<div class="desc">Key file</div>
</section>
</aside>
</main>

<footer class="status lone d-flex justify-content-end">
<div class="cell"><span>FB:: 0%</span></div>
<div class="cell"><span>Var:: 0%</span></div>
<div class="cell"><i style="width:13%"></i><span>EEPROM: 13%</span></div>
<div class="cell"><span>ROM: 1%</span></div>
<div class="cell"><i style="width:6%"></i><span>RAM: 6%</span></div>
<div class="cell cell-dev"><svg width="16" height="15"><path d="M8 0l8 15H0z" fill="#ffc814"/><path d="M8 5v5M8 11.500v2" stroke="#5a4a28" stroke-width="2"/></svg><span>Device is not connected</span></div>
<div class="cell cell-ok"><svg width="13" height="12"><path d="M1 6l4 4 7-9" stroke="#3f958e" stroke-width="2"/></svg><span>none</span></div>
<div class="cell cell-disk"><svg width="18" height="18"><circle cx="8" cy="10" r="7" class="s fw"/><circle cx="8" cy="10" r="1.500" class="s1"/><path d="M14 1v7M11 6l3 3 3-3" stroke="#008a84" stroke-width="2"/></svg></div>
<div class="cell-end"></div>
</footer>
</body>
</html>
